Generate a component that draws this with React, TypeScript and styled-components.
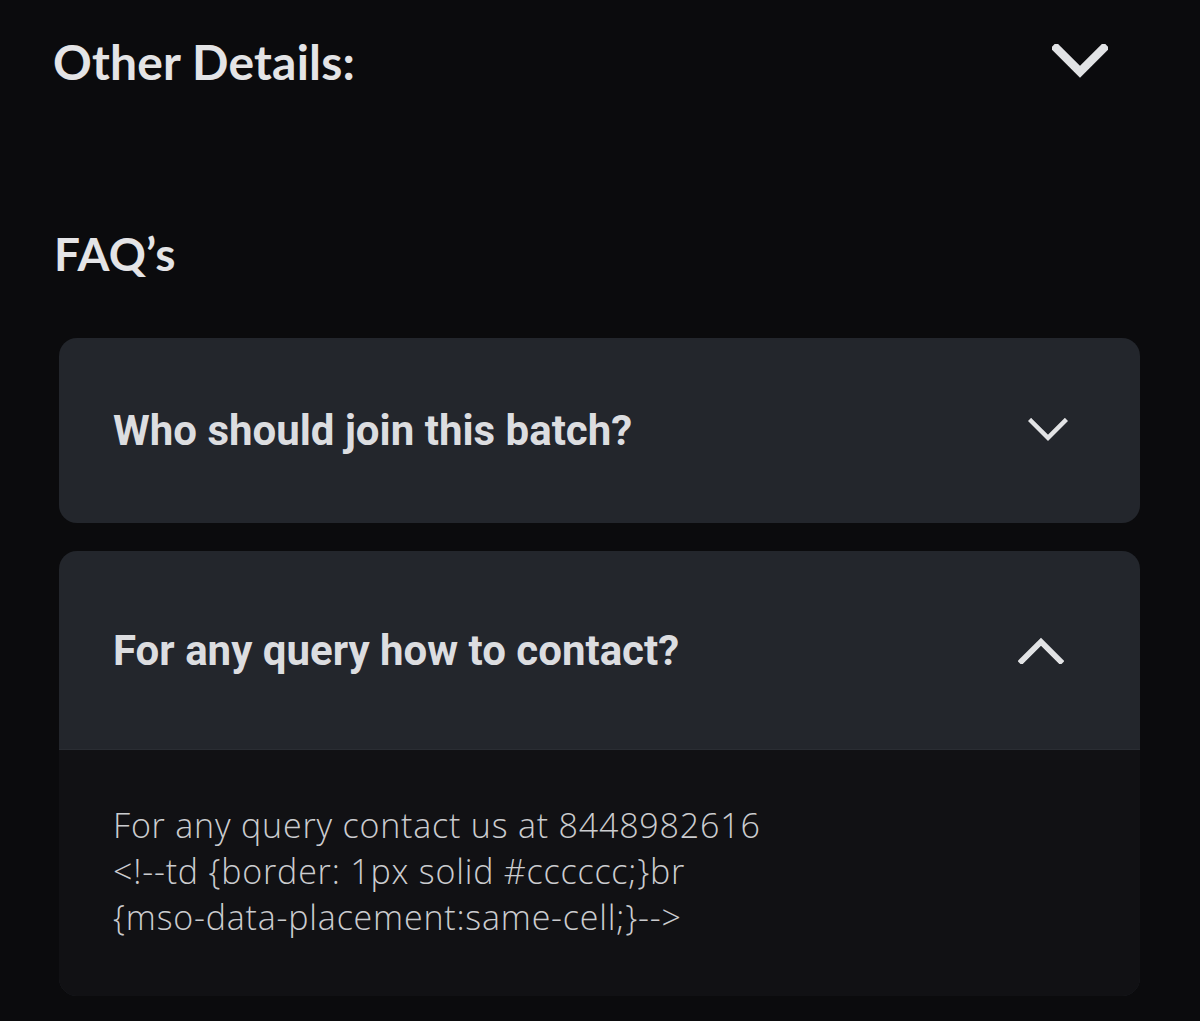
import React, { useState } from "react";
import styled, { createGlobalStyle } from "styled-components";

const GlobalStyle = createGlobalStyle`
	html, body {
		margin: 0;
		padding: 0;
		background: #0b0b0d;
	}
	body {
		font-family: "Roboto", "Liberation Sans", sans-serif;
	}
`;

const Page = styled.div`
	min-height: 1021px;
	background: #0b0b0d;
	padding: 0 60px 0 53px;
	box-sizing: border-box;
`;

const SectionHeader = styled.div`
	display: flex;
	align-items: center;
	justify-content: space-between;
	height: 122px;
	padding-right: 32px;
`;

const SectionTitle = styled.h2<{ size?: number }>`
	margin: 0;
	font-family: "Lato", "Open Sans", sans-serif;
	font-weight: 700;
	font-size: ${props => props.size ?? 48}px;
	color: #e4e4e6;
	letter-spacing: 0.2px;
`;

const FaqTitle = styled(SectionTitle)`
	margin: 102px 0 0 1px;
	line-height: 60px;
`;

const FaqList = styled.div`
	display: flex;
	flex-direction: column;
	gap: 28px;
	margin-top: 54px;
	padding-left: 6px;
`;

const Card = styled.div`
	background: #23262c;
	border-radius: 18px;
	overflow: hidden;
`;

const Question = styled.button<{ open: boolean }>`
	display: flex;
	align-items: center;
	justify-content: space-between;
	width: 100%;
	height: ${props => (props.open ? 198 : 185)}px;
	padding: 0 ${props => (props.open ? 76 : 72)}px 0 54px;
	box-sizing: border-box;
	border: none;
	background: transparent;
	cursor: pointer;
	font-family: "Roboto", "Liberation Sans", sans-serif;
	font-weight: 700;
	font-size: 42px;
	color: #dcdde0;
	text-align: left;
`;

const Answer = styled.div`
	background: #111114;
	border-top: 1px solid #2a2d33;
	padding: 52px 54px 56px;
	font-family: "Open Sans", "Noto Sans", sans-serif;
	font-weight: 300;
	font-size: 34px;
	letter-spacing: 0.8px;
	line-height: 46px;
	color: #cbcccf;
`;

const Chevron = ({ up, width, stroke }: { up?: boolean; width: number; stroke: number }) => (
	<svg width={width} height={width * 0.62} viewBox="0 0 40 25" fill="none">
		<path
			d={up ? "M3 22 L20 5 L37 22" : "M3 3 L20 20 L37 3"}
			stroke="#e2e3e5"
			strokeWidth={stroke}
			strokeLinecap="square"
		/>
	</svg>
);

const faqs = [
	{
		q: "Who should join this batch?",
		a: ["For any query contact us at 8448982616"],
	},
	{
		q: "For any query how to contact?",
		a: [
			"For any query contact us at 8448982616",
			"<!--td {border: 1px solid #cccccc;}br",
			"{mso-data-placement:same-cell;}-->",
		],
	},
];

export default function App() {
	const [openIndex, setOpenIndex] = useState<number | null>(1);

	return (
		<>
			<GlobalStyle />
			<Page>
				<SectionHeader>
					<SectionTitle>Other Details:</SectionTitle>
					<Chevron width={56} stroke={6} />
				</SectionHeader>
				<FaqTitle size={46}>FAQ’s</FaqTitle>
				<FaqList>
					{faqs.map((faq, index) => {
						const open = index === openIndex;
						return (
							<Card key={faq.q}>
								<Question open={open} onClick={() => setOpenIndex(open ? null : index)}>
									{faq.q}
									<Chevron up={open} width={open ? 46 : 40} stroke={open ? 5 : 4.5} />
								</Question>
								{open && (
									<Answer>
										{faq.a.map(line => (
											<div key={line}>{line}</div>
										))}
									</Answer>
								)}
							</Card>
						);
					})}
				</FaqList>
			</Page>
		</>
	);
}
